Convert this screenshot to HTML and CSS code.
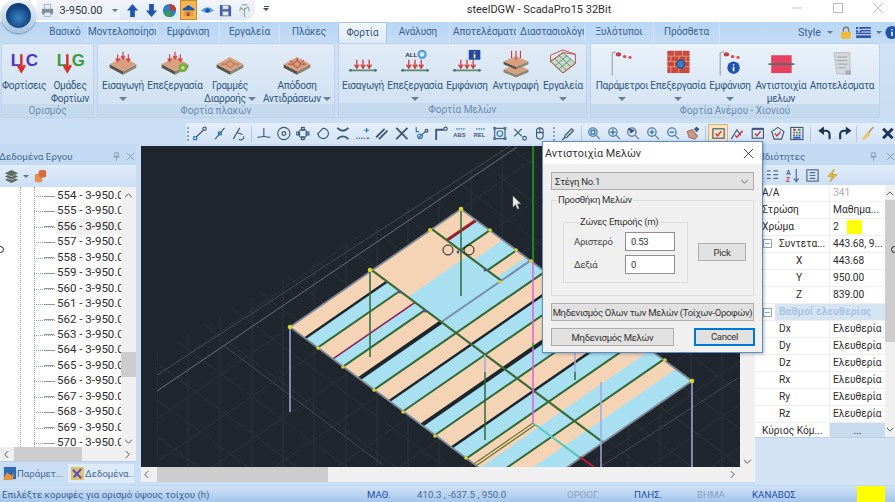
FILE: index.html
```html
<!DOCTYPE html>
<html lang="el">
<head>
<meta charset="utf-8">
<title>steelDGW - ScadaPro15 32Bit</title>
<link rel="stylesheet" href="styles.css">
</head>
<body>
<svg class="defs" width="0" height="0">
  <defs>
    <symbol id="arrows3" viewBox="0 0 36 32"><path class="red" d="M12 6v7M9.800 10.500 12 14l2.200-3.500M18 3v7M15.800 7.500 18 11l2.200-3.500M24 6v7M21.800 10.500 24 14l2.200-3.500"/></symbol>
    <symbol id="slab" viewBox="0 0 36 32">
      <polygon class="s-side" points="3,17 18,25 18,29 3,21"/><polygon class="s-side2" points="18,25 33,17 33,21 18,29"/>
      <polygon class="s-top" points="18,9 33,17 18,25 3,17"/>
    </symbol>
    <symbol id="mload" viewBox="0 0 36 32">
      <path class="mline" d="M4 24H32"/><circle class="mdot" cx="4" cy="24" r="1.600"/><circle class="mdot" cx="32" cy="24" r="1.600"/>
      <path class="red2" d="M11 12v9M8.500 17.500 11 21.500l2.500-4M18 12v9M15.500 17.500 18 21.500l2.500-4M25 12v9M22.500 17.500 25 21.500l2.500-4"/>
    </symbol>
    <symbol id="flag" viewBox="0 0 36 32">
      <path class="pole" d="M7 30V4.500L11 3"/>
      <ellipse class="fl" cx="14" cy="6" rx="3" ry="2.500"/><ellipse class="fl2" cx="21" cy="8.500" rx="2" ry="1.800"/><ellipse class="fl2" cx="27" cy="9.500" rx="1.800" ry="1.600"/>
    </symbol>
    <symbol id="mag" viewBox="0 0 16 16"><circle cx="7" cy="6.500" r="4.500"/><path class="thick" d="M10.500 10 14.500 14"/></symbol>
  </defs>
</svg>

<div class="app">
  <div class="orb"><div class="orb-in"></div></div>

  <header class="titlebar">
    <div class="qat">
      <svg class="qi" viewBox="0 0 16 16"><rect class="print" x="2" y="6" width="12" height="6" rx="1"/><rect class="paper" x="4.500" y="1.500" width="7" height="5"/><rect class="paper" x="4.500" y="10" width="7" height="4.500"/></svg>
      <div class="qcombo"><span>3-950.00</span><i class="caret"></i></div>
      <svg class="qi" viewBox="0 0 16 16"><path class="fblue" d="M8 1 14 8H10.500V15H5.500V8H2z"/></svg>
      <svg class="qi" viewBox="0 0 16 16"><path class="fblue" d="M8 15 14 8H10.500V1H5.500V8H2z"/></svg>
      <svg class="qi" viewBox="0 0 16 16"><circle class="fglobe" cx="8" cy="8" r="7"/><path class="fred" d="M8 1a7 7 0 0 1 7 7H9z"/><path class="fgreen" d="M2 10 8 8l3 7H6z"/></svg>
      <div class="qhi"><svg class="qi" viewBox="0 0 16 16"><path class="fblue" d="M1 7 8 2l7 5-2 1H3z"/><rect class="fhouse" x="3" y="8" width="10" height="6"/><rect class="fred" x="6" y="10" width="3" height="4"/></svg></div>
      <svg class="qi" viewBox="0 0 16 16"><path class="feye" d="M1 8q7-7 14 0-7 5-14 0z"/><circle class="fblue" cx="8" cy="8" r="2.500"/></svg>
      <svg class="qi" viewBox="0 0 16 16"><path class="fsave" d="M2 2H12L14 4V14H2z"/><rect class="paper" x="5" y="2.500" width="6" height="4"/><rect class="paper" x="5" y="9" width="6" height="4.500"/></svg>
      <svg class="qi" viewBox="0 0 16 16"><path class="tree" d="M8 15V5M8 8 4 5M8 7l4-3M3 9l1-5M13 9l-1-5M5 2h6"/></svg>
    </div>
    <span class="qcust"><i class="dash"></i><i class="caret dark"></i></span>
    <div class="wintitle">steelDGW - ScadaPro15 32Bit</div>
    <div class="winbtns">
      <svg viewBox="0 0 12 12"><path d="M1 6H11"/></svg>
      <svg viewBox="0 0 12 12"><rect x="1.500" y="1.500" width="9" height="9"/></svg>
      <svg viewBox="0 0 12 12"><path d="M1 1 11 11M11 1 1 11"/></svg>
    </div>
  </header>

  <nav class="tabs">
    <span class="tab t1">Βασικό</span>
    <span class="tab t2">Μοντελοποίηση</span>
    <span class="tab t3">Εμφάνιση</span>
    <span class="tab t4">Εργαλεία</span>
    <span class="tab t5">Πλάκες</span>
    <span class="tab t6 active">Φορτία</span>
    <span class="tab t7">Ανάλυση</span>
    <span class="tab t8">Αποτελέσματα</span>
    <span class="tab t9">Διαστασιολόγηση</span>
    <span class="tab t10">Ξυλότυποι</span>
    <span class="tab t11">Πρόσθετα</span>
    <div class="tabs-right">
      <span class="style-l">Style</span><i class="caret"></i>
      <svg class="ri" viewBox="0 0 16 16"><path class="lock-s" d="M5 8V5a3 3 0 0 1 6 0v3"/><rect class="lock" x="2.500" y="7" width="11" height="8" rx="1"/></svg>
      <svg class="ri flagi" viewBox="0 0 16 12"><rect class="gr" width="16" height="12"/><path class="gr-w" d="M0 2.500H16M0 5.500H16M0 8.500H16"/><rect class="gr" width="6" height="6"/><path class="gr-w" d="M3 0V6M0 3H6"/></svg>
      <i class="caret"></i>
      <svg class="ri info" viewBox="0 0 16 16"><circle class="fblue" cx="8" cy="8" r="7.500"/><path class="white" d="M8 4v1.500M8 7v5"/></svg>
    </div>
  </nav>

  <section class="ribbon">
    <div class="group g1">
      <div class="btns">
        <div class="rb w46">
          <svg class="ric" viewBox="0 0 36 32"><text class="logo" x="3" y="19"><tspan class="lb">L</tspan><tspan class="ld"> </tspan><tspan class="lb">C</tspan></text><path class="red3" d="M15 6V22M11 18 15 25l4-7"/></svg>
          <span>Φορτίσεις</span>
        </div>
        <div class="rb w46">
          <svg class="ric" viewBox="0 0 36 32"><text class="logo" x="3" y="19"><tspan class="lg">L</tspan><tspan class="ld"> </tspan><tspan class="lg">G</tspan></text><path class="red3" d="M15 6V22M11 18 15 25l4-7"/></svg>
          <span>Ομάδες<br>Φορτίων</span>
        </div>
      </div>
      <div class="glabel">Ορισμός</div>
    </div>
    <div class="group g2">
      <div class="btns">
        <div class="rb w52">
          <svg class="ric" viewBox="0 0 36 32"><use href="#slab"/><use href="#arrows3"/></svg>
          <span>Εισαγωγή</span><i class="drop"></i>
        </div>
        <div class="rb w52">
          <svg class="ric" viewBox="0 0 36 32"><use href="#slab"/><use href="#arrows3"/><circle class="gear" cx="27" cy="21" r="5"/><circle class="gear-in" cx="27" cy="21" r="2"/></svg>
          <span>Επεξεργασία</span>
        </div>
        <div class="rb w58">
          <svg class="ric" viewBox="0 0 36 32"><use href="#slab"/><path class="yl" d="M8 17 13 17 18 13 23 17H28M13 17 18 21 23 17"/></svg>
          <span>Γραμμές<br>Διαρροής <i class="inl"></i></span>
        </div>
        <div class="rb w76">
          <svg class="ric" viewBox="0 0 36 32"><use href="#slab"/><path class="yl2" d="M8 17 13 17 18 13 23 17H28M13 17 18 21 23 17M18 13V10M13 15 10 13M23 15l3-2"/></svg>
          <span>Απόδοση<br>Αντιδράσεων <i class="inl"></i></span>
        </div>
      </div>
      <div class="glabel">Φορτία πλακών</div>
    </div>
    <div class="group g3">
      <div class="btns">
        <div class="rb w50">
          <svg class="ric" viewBox="0 0 36 32"><use href="#mload"/></svg>
          <span>Εισαγωγή</span>
        </div>
        <div class="rb w54">
          <svg class="ric" viewBox="0 0 36 32"><use href="#mload"/><text class="all" x="7" y="9">ALL</text><circle class="ring" cx="26" cy="6" r="4"/></svg>
          <span>Επεξεργασία</span><i class="drop"></i>
        </div>
        <div class="rb w50">
          <svg class="ric" viewBox="0 0 36 32"><use href="#mload"/><rect class="navy" x="20" y="1" width="13" height="11"/><path class="white" d="M26.500 3v1M26.500 5.500v5"/></svg>
          <span>Εμφάνιση</span>
        </div>
        <div class="rb w47">
          <svg class="ric" viewBox="0 0 36 32"><polygon class="s-top" points="18,17 32,23 18,29 4,23"/><polygon class="s-side2" points="4,23 18,29 32,23 32,26 18,32 4,26"/><polygon class="s-side" points="4,14 18,20 18,23 4,17"/><polygon class="s-side2" points="18,20 32,14 32,17 18,23"/><polygon class="s-top" points="18,8 32,14 18,20 4,14"/><path class="red" d="M13 2v8M18 2v10M23 2v8"/></svg>
          <span>Αντιγραφή</span>
        </div>
        <div class="rb w48">
          <svg class="ric" viewBox="0 0 36 32"><path class="netb" d="M4 14 18 27 32 16 18 4zM9 19 23 7M13 23 27 11M8 10 22 24M13 7 27 20"/><path class="netr" d="M4 14 18 4 32 6V16L18 27zM4 14 4 7 18 1 32 6"/></svg>
          <span>Εργαλεία</span><i class="drop"></i>
        </div>
      </div>
      <div class="glabel">Φορτία Μελών</div>
    </div>
    <div class="group g4">
      <div class="btns">
        <div class="rb w64">
          <svg class="ric" viewBox="0 0 36 32"><use href="#flag"/></svg>
          <span>Παράμετροι</span><i class="drop"></i>
        </div>
        <div class="rb w48">
          <svg class="ric" viewBox="0 0 36 32"><rect class="brick" x="6" y="2" width="25" height="25"/><path class="brick-l" d="M6 8H31M6 14H31M6 20H31M14 2v6M23 2v6M10 8v6M19 8v6M27 8v6M14 14v6M23 14v6M10 20v7M19 20v7"/><circle class="gearb" cx="21" cy="17" r="4.500"/></svg>
          <span>Επεξεργασία</span><i class="drop"></i>
        </div>
        <div class="rb w56">
          <svg class="ric" viewBox="0 0 36 32"><use href="#flag"/><circle class="fblue" cx="22" cy="21" r="7"/><path class="white" d="M22 17v1.500M22 20v5"/></svg>
          <span>Εμφάνιση</span><i class="drop"></i>
        </div>
        <div class="rb w46">
          <svg class="ric" viewBox="0 0 36 32"><rect class="pink" x="7" y="7" width="23" height="20"/><path class="tealb" d="M4 17H33"/></svg>
          <span>Αντιστοιχία<br>μελων</span>
        </div>
        <div class="rb w76">
          <svg class="ric" viewBox="0 0 36 32"><path class="doc" d="M9 4H27V28H12z"/><path class="docl" d="M12 9H24M12 13H24M13 17H24M14 21H22"/><rect class="doc2" x="22" y="24" width="6" height="5"/></svg>
          <span>Αποτελέσματα</span>
        </div>
      </div>
      <div class="glabel">Φορτία Ανέμου - Χιονιού</div>
    </div>
  </section>

  <div class="tbrow">
    <div class="toolbar">
      <i class="grip"></i>
      <svg class="ti" viewBox="0 0 16 16"><path d="M4 12 12 4"/><circle cx="13" cy="3" r="1.800"/><rect class="bl" x="1.500" y="11.500" width="3" height="3"/></svg>
      <svg class="ti" viewBox="0 0 16 16"><path d="M3 14 13 2"/><rect class="bl" x="6.500" y="6.500" width="3" height="3"/></svg>
      <svg class="ti" viewBox="0 0 16 16"><path d="M2 14 9 2M6 7l6 2M8 14a3 3 0 0 0 5-3"/></svg>
      <i class="sep s5"></i>
      <svg class="ti" viewBox="0 0 16 16"><path d="M8 2V11M1 12q4 0 7-1 3 1 7 1"/></svg>
      <svg class="ti" viewBox="0 0 16 16"><circle cx="8" cy="8" r="6.500"/><circle cx="8" cy="8" r="2"/></svg>
      <svg class="ti" viewBox="0 0 16 16"><circle cx="8" cy="8" r="4.500"/><rect x="6.500" y="1.500" width="3" height="3"/><rect x="6.500" y="11.500" width="3" height="3"/><rect x="1.500" y="6.500" width="3" height="3"/><rect x="11.500" y="6.500" width="3" height="3"/></svg>
      <svg class="ti" viewBox="0 0 16 16"><path d="M3 8a5.500 5.500 0 1 0 5-5.500M8 2.500 2 9"/></svg>
      <svg class="ti heavy" viewBox="0 0 16 16"><path d="M2 2Q8 8 14 2M2 14Q8 8 14 14"/></svg>
      <svg class="ti" viewBox="0 0 16 16"><path class="dots" d="M1 13H10"/><path class="bl" d="M12 2V7M9.500 4.500H14.500"/><path d="M12 13h3"/></svg>
      <svg class="ti heavy" viewBox="0 0 16 16"><path d="M2 12 11 3M5 14 14 5"/></svg>
      <svg class="ti heavy" viewBox="0 0 16 16"><path d="M2 2 14 14M14 2 2 14"/></svg>
      <svg class="ti" viewBox="0 0 16 16"><path class="bl" d="M2 1V6H5"/><path d="M4 13 13 5"/><circle class="bl" cx="6" cy="11" r="2.500"/><circle cx="13" cy="5" r="1.500"/></svg>
      <svg class="ti heavy" viewBox="0 0 16 16"><path d="M3 15V4H11"/><circle class="thin" cx="13" cy="3" r="1.800"/></svg>
      <svg class="ti" viewBox="0 0 16 16"><path class="bl dots" d="M3 3H13"/><text class="tt" x="0" y="12">ABS</text></svg>
      <svg class="ti" viewBox="0 0 16 16"><path class="bl dots" d="M3 3H13"/><text class="tt" x="0.500" y="12">REL</text></svg>
      <svg class="ti" viewBox="0 0 16 16"><rect x="2.500" y="2.500" width="11" height="11"/><circle class="bl" cx="8" cy="8" r="3"/><rect class="fillb" x="1" y="1" width="3" height="3"/><rect class="fillb" x="12" y="1" width="3" height="3"/><rect class="fillb" x="1" y="12" width="3" height="3"/><rect class="fillb" x="12" y="12" width="3" height="3"/></svg>
      <svg class="ti" viewBox="0 0 16 16"><path d="M2 3 10 11M10 3 2 11"/><circle cx="13" cy="13" r="2"/></svg>
      <svg class="ti" viewBox="0 0 16 16"><rect x="4.500" y="2" width="7" height="12" rx="3.500"/><path d="M8 2V7M4.500 7H11.500"/></svg>
      <i class="grip g2s"></i>
      <svg class="ti" viewBox="0 0 16 16"><path class="pen" d="M3 13 4 10 11 3 13 5 6 12z"/><path d="M1 15 3 13"/></svg>
      <i class="sep s5"></i>
      <svg class="ti mg" viewBox="0 0 16 16"><use href="#mag"/><rect class="bl" x="5" y="4.500" width="4" height="4"/></svg>
      <svg class="ti mg" viewBox="0 0 16 16"><use href="#mag"/><path class="bl" d="M7 3.500v6M4 6.500h6"/></svg>
      <svg class="ti mg" viewBox="0 0 16 16"><use href="#mag"/><path class="thick" d="M3 3 8 5 5 7"/></svg>
      <svg class="ti mg" viewBox="0 0 16 16"><use href="#mag"/><path class="bl" d="M7 4v5M4.500 6.500h5"/></svg>
      <svg class="ti mg" viewBox="0 0 16 16"><use href="#mag"/><path class="bl" d="M4.500 6.500h5"/></svg>
      <svg class="ti" viewBox="0 0 16 16"><path class="hand" d="M2 6 7 4l6 7-3 3-6-2z"/><path class="thick" d="M12 1v5M9.500 3.500h5"/></svg>
      <i class="sep s6"></i>
      <span class="tb-hi"><svg class="ti" viewBox="0 0 16 16"><rect x="2" y="3" width="12" height="10"/><path class="chk" d="M5 8 7 10.500 11 5.500"/></svg></span>
      <svg class="ti" viewBox="0 0 16 16"><path d="M1 14 7 4l4 6"/><path class="chk" d="M5 10 7 12l6-7"/></svg>
      <svg class="ti" viewBox="0 0 16 16"><path class="thick" d="M2 3H14"/><rect x="2" y="3" width="12" height="10"/><path class="chk" d="M5 8 7 10.500 11 5.500"/></svg>
      <svg class="ti" viewBox="0 0 16 16"><path d="M8 1.500 14.500 6 12 14H4L1.500 6z"/><path class="chk" d="M5 8 7 10.500 11 6"/></svg>
      <svg class="ti" viewBox="0 0 16 16"><rect x="1.500" y="1.500" width="13" height="13"/><path class="mr" d="M4 4H7M10 7h2M4 10H6"/><path class="mg2" d="M7 7H9M9 4h3M4 7H6M7 10h2"/><path class="mb" d="M10 10h2M4 12.500H12"/></svg>
      <i class="sep s8"></i>
      <svg class="ti hv" viewBox="0 0 16 16"><path d="M13 14V9a4 4 0 0 0-4-4H3"/><path class="fhv" d="M7 0.500 1 5l6 4.500z"/></svg>
      <svg class="ti hv" viewBox="0 0 16 16"><path d="M3 14V9a4 4 0 0 1 4-4H13"/><path class="fhv" d="M9 0.500 15 5l-6 4.500z"/></svg>
      <i class="sep s4"></i>
      <svg class="ti" viewBox="0 0 16 16"><path class="broom" d="M14 1 8 8"/><path class="brush" d="M8 6 11 9 4 15 1 14z"/></svg>
      <svg class="ti hv" viewBox="0 0 16 16"><path class="xx" d="M3 3 13 13M13 3 3 13"/></svg>
    </div>
  </div>

  <main class="main">
    <aside class="left">
      <div class="phead"><span class="ptitle shift">Δεδομένα Εργου</span>
        <svg class="pin" viewBox="0 0 10 10"><path d="M3 1H7V5H3zM1.500 5.500H8.500M5 5.500V9.500"/></svg>
        <svg class="pin" viewBox="0 0 10 10"><path d="M1 1 9 9M9 1 1 9"/></svg>
      </div>
      <div class="ptools">
        <svg class="pti" viewBox="0 0 16 16"><path class="layer" d="M8 1 15 4.500 8 8 1 4.500z"/><path class="layer" d="M1 8 8 11.500 15 8 12 6.500 8 8.500 4 6.500z"/><path class="layer" d="M1 11.500 8 15 15 11.500 12 10 8 12 4 10z"/></svg>
        <i class="caret"></i>
        <svg class="pti" viewBox="0 0 16 16"><rect class="or" x="2" y="5" width="8" height="9" rx="2"/><rect class="or2" x="6" y="1" width="8" height="8" rx="2"/></svg>
      </div>
      <div class="treewrap">
        <div class="tree-body">
          <i class="blip"></i>
          <i class="vdot v1"></i><i class="vdot v2"></i>
          <ul class="rows">
            <li>554 - 3-950.00</li><li>555 - 3-950.00</li><li class="sel">556 - 3-950.00</li><li>557 - 3-950.00</li>
            <li>558 - 3-950.00</li><li>559 - 3-950.00</li><li>560 - 3-950.00</li><li>561 - 3-950.00</li>
            <li>562 - 3-950.00</li><li>563 - 3-950.00</li><li>564 - 3-950.00</li><li>565 - 3-950.00</li>
            <li>566 - 3-950.00</li><li>567 - 3-950.00</li><li>568 - 3-950.00</li><li>569 - 3-950.00</li><li>570 - 3-950.00</li>
          </ul>
        </div>
        <div class="vbar tv">
          <svg class="chev" viewBox="0 0 10 6"><path d="M1 5 5 1 9 5"/></svg>
          <div class="vthumb"></div>
          <svg class="chev" viewBox="0 0 10 6"><path d="M1 1 5 5 9 1"/></svg>
        </div>
      </div>
      <div class="hbar th">
        <svg class="chevh" viewBox="0 0 6 10"><path d="M5 1 1 5 5 9"/></svg>
        <div class="hthumb short"></div>
        <svg class="chevh" viewBox="0 0 6 10"><path d="M1 1 5 5 1 9"/></svg>
      </div>
      <div class="ltabs">
        <div class="ltab"><svg class="lti" viewBox="0 0 16 16"><rect class="navyf" x="2" y="1" width="13" height="13"/><path class="orf" d="M1 15 5 7l5 3 3-2-2 7z"/></svg><span>Παράμετ...</span></div>
        <div class="ltab on"><svg class="lti" viewBox="0 0 16 16"><rect class="yelf" x="1" y="1" width="14" height="14"/><path class="xmark" d="M3 4 12 13M12 3 4 12"/></svg><span>Δεδομένα...</span></div>
      </div>
    </aside>

    <div class="view">
      <svg class="canvas" viewBox="141 146 599 321" preserveAspectRatio="none">
        <defs>
          <clipPath id="gridclip"><polygon points="157,352 515,146 740,146 740,467 157,467"/></clipPath>
        </defs>
        <g clip-path="url(#gridclip)">
          <path class="gv" d="M157 146V467M188 146V467M220 146V467M252 146V467M283 146V467M314 146V467M346 146V467M377 146V467M408 146V467M439 146V467M471 146V467M502 146V467M534 146V467M565 146V467M597 146V467M628 146V467M660 146V467M691 146V467M722 146V467"/>
          <g transform="matrix(2.31 1.72 1.71 -1.18 290 327)">
            <path class="gd" d="M-130 -300V300M-117 -300V300M-104 -300V300M-91 -300V300M-78 -300V300M-65 -300V300M-52 -300V300M-39 -300V300M-26 -300V300M-13 -300V300M0 -300V300M13 -300V300M26 -300V300M39 -300V300M52 -300V300M65 -300V300M78 -300V300M91 -300V300M104 -300V300M117 -300V300M130 -300V300M143 -300V300M156 -300V300M169 -300V300M182 -300V300"/>
            <path class="gd" d="M-300 -130H300M-300 -115H300M-300 -100H300M-300 -85H300M-300 -70H300M-300 -55H300M-300 -40H300M-300 -25H300M-300 -10H300M-300 5H300M-300 20H300M-300 35H300M-300 50H300M-300 65H300M-300 80H300M-300 95H300M-300 110H300M-300 125H300M-300 140H300"/>
          </g>
        </g>
        <path class="gb" d="M157 391 517 147"/>
        <path class="gb3" d="M157 375 510 146"/>
        <path class="gb2" d="M223 345 383 465M600 467 738 378"/>

        <g transform="matrix(2.31 1.72 1.71 -1.18 290 327)">
          <rect class="blue" x="0" y="0" width="100" height="100"/>
          <rect class="peach" x="0" y="0" width="6.500" height="48"/>
          <rect class="peach" x="12" y="0" width="6.600" height="48"/>
          <rect class="peach" x="23" y="0" width="7" height="48"/>
          <rect class="peach" x="36.400" y="0" width="6.600" height="100"/>
          <rect class="peach" x="49" y="0" width="8" height="100"/>
          <rect class="peach" x="62.800" y="0" width="7.200" height="100"/>
          <rect class="peach" x="76.400" y="0" width="5.600" height="100"/>
          <rect class="peach" x="87.600" y="0" width="5.400" height="100"/>
          <rect class="peach" x="0" y="48" width="15.500" height="35"/>
          <rect class="peach" x="0" y="83" width="6.500" height="17"/>
          <rect class="peach" x="12.400" y="83" width="5.600" height="17"/>
          <rect class="peach" x="24" y="83" width="4" height="17"/>
          <path class="l-blk" d="M6.500 0V48M43 0V100M70 0V100"/>
          <path class="l-blk2" d="M30 0V48M57 0V100"/>
          <path class="l-grn" d="M12 0V48M23 0V48M36.400 0V100M49 0V100M62.800 0V100M76.400 0V100M87.600 0V100M12.400 83V100M24 83V100"/>
          <path class="l-red" d="M18.600 0V48"/>
          <path class="l-red2" d="M6.500 83V100"/>
          <path class="l-olv" d="M79.600 0V34.600M80.600 0V34.600"/>
          <path class="l-tea" d="M79.600 34.600H100"/>
          <path class="l-gry" d="M30 48V100"/>
          <path class="l-rdg" d="M0 48H100M0 83H30"/>
          <path class="l-edge" d="M0 0H100V100H0z"/>
        </g>

        <path class="c-lav" d="M290 327V412M601 382V467M692 381V467"/>
        <path class="c-lav" d="M485 355V372M575 340V372"/>
        <path class="c-grn" d="M370 272V357M461 209V296M485 372V440M575 372V380"/>
        <path class="c-bright" d="M533 146V261M533 343V348"/>
        <path class="c-mag" d="M533 261V343M533 348V423"/>
        <path class="c-teal" d="M533 423 580 457"/>
        <path class="c-red" d="M580 457 594 467"/>
        <g class="nodes">
          <circle cx="290" cy="327" r="2.300"/><circle cx="370" cy="270" r="2.300"/><circle cx="461" cy="209" r="2.300"/><circle cx="430" cy="230" r="2"/><circle cx="490" cy="230" r="1.800"/><circle cx="516" cy="250" r="1.800"/><circle cx="531" cy="261" r="1.800"/><circle cx="500" cy="282" r="1.800"/><circle cx="318" cy="348" r="1.800"/><circle cx="343" cy="367" r="1.800"/><circle cx="374" cy="390" r="1.800"/><circle cx="403" cy="412" r="1.800"/><circle cx="435" cy="436" r="1.800"/><circle cx="466" cy="458" r="1.800"/><circle cx="665" cy="360" r="1.800"/><circle cx="692" cy="381" r="2.300"/>
        </g>
        <g class="mids"><circle cx="400" cy="292" r="1.500"/><circle cx="425" cy="311" r="1.500"/><circle cx="458" cy="252" r="1.500"/><circle cx="485" cy="270" r="1.500"/></g>
        <circle class="pick" cx="448" cy="250" r="5"/><circle class="pick" cx="469" cy="250" r="5"/>
        <path class="cursor" d="M513 196V207L515.500 204.500 517.500 209 519 208.300 517 203.800H520.500z"/>
      </svg>
      <div class="vbar cv">
        <div class="vthumb long"></div>
        <svg class="chev" viewBox="0 0 10 6"><path d="M1 1 5 5 9 1"/></svg>
      </div>
      <div class="hbar ch">
        <svg class="chevh" viewBox="0 0 6 10"><path d="M5 1 1 5 5 9"/></svg>
        <div class="hthumb wide"></div>
        <svg class="chevh" viewBox="0 0 6 10"><path d="M1 1 5 5 1 9"/></svg>
      </div>
      <div class="corner"></div>
    </div>

    <aside class="right">
      <div class="phead"><span class="ptitle pad">Ιδιότητες</span>
        <svg class="pin" viewBox="0 0 10 10"><path d="M3 1H7V5H3zM1.500 5.500H8.500M5 5.500V9.500"/></svg>
        <svg class="pin" viewBox="0 0 10 10"><path d="M1 1 9 9M9 1 1 9"/></svg>
      </div>
      <div class="rtools">
        <svg class="pti" viewBox="0 0 16 16"><path class="cat" d="M2 3H6M2 7H6M2 11H6M9 3H14M9 7H14M9 11H14"/></svg>
        <svg class="pti az" viewBox="0 0 16 16"><text class="azt" x="1" y="7">A</text><text class="azr" x="1" y="15">Z</text><path class="cat" d="M12 1V14M9.500 11 12 14.500 14.500 11"/></svg>
        <svg class="pti" viewBox="0 0 16 16"><rect class="cat" x="2" y="2" width="12" height="12"/><path class="cat" d="M5 5H11M5 8H11M5 11H11"/></svg>
        <svg class="pti" viewBox="0 0 16 16"><path class="bolt" d="M10 1 3 9H8L5 15l8-8H8z"/></svg>
      </div>
      <div class="pgwrap">
        <div class="pg">
          <div class="pr"><span class="pk">Α/Α</span><span class="pv dim">341</span></div>
          <div class="pr"><span class="pk">Στρώση</span><span class="pv">Μαθημα...</span></div>
          <div class="pr"><span class="pk">Χρώμα</span><span class="pv">2<i class="swatch"></i></span></div>
          <div class="pr"><span class="pk tog"><i class="minus"></i>Συντετα...</span><span class="pv">443.68, 9...</span></div>
          <div class="pr"><span class="pk sub">X</span><span class="pv">443.68</span></div>
          <div class="pr"><span class="pk sub">Y</span><span class="pv">950.00</span></div>
          <div class="pr"><span class="pk sub">Z</span><span class="pv">839.00</span></div>
          <div class="pr head"><i class="minus"></i><span class="hd">Βαθμοί ελευθερίας</span></div>
          <div class="pr"><span class="pk ind">Dx</span><span class="pv">Ελευθερία</span></div>
          <div class="pr"><span class="pk ind">Dy</span><span class="pv">Ελευθερία</span></div>
          <div class="pr"><span class="pk ind">Dz</span><span class="pv">Ελευθερία</span></div>
          <div class="pr"><span class="pk ind">Rx</span><span class="pv">Ελευθερία</span></div>
          <div class="pr"><span class="pk ind">Ry</span><span class="pv">Ελευθερία</span></div>
          <div class="pr"><span class="pk ind">Rz</span><span class="pv">Ελευθερία</span></div>
          <div class="pr"><span class="pk">Κύριος Κόμ...</span><span class="pv dots3">...</span></div>
        </div>
        <div class="vbar rv">
          <svg class="chev" viewBox="0 0 10 6"><path d="M1 5 5 1 9 5"/></svg>
          <div class="vthumb rth"></div>
          <svg class="chev" viewBox="0 0 10 6"><path d="M1 1 5 5 9 1"/></svg>
        </div>
      </div>
      <div class="pdesc"></div>
      <i class="blip rb2"></i>
    </aside>
  </main>

  <footer class="status">
    <span class="st s-msg">Επιλέξτε κορυφές για ορισμό ύψους τοίχου (h)</span>
    <span class="st s-ma on">ΜΑΘ.</span>
    <span class="st s-co">410.3 , -637.5 , 950.0</span>
    <span class="st s-or off">ΟΡΘΟΓ.</span>
    <span class="st s-pl on">ΠΛΗΣ.</span>
    <span class="st s-bh off">ΒΗΜΑ</span>
    <span class="st s-ka on">ΚΑΝΑΒΟΣ</span>
    <i class="st-yellow"></i>
  </footer>

  <div class="dialog">
    <div class="dtitle"><span>Αντιστοιχία Μελών</span>
      <svg class="dx" viewBox="0 0 12 12"><path d="M1 1 11 11M11 1 1 11"/></svg>
    </div>
    <div class="dbody">
      <div class="combo"><span>Στέγη Νο.1</span><svg class="cchev" viewBox="0 0 10 6"><path d="M1 1 5 5 9 1"/></svg></div>
      <fieldset class="fs outer">
        <legend>Προσθήκη Μελών</legend>
        <div class="fsrow">
          <fieldset class="fs inner">
            <legend>Ζώνες Επιροής (m)</legend>
            <div class="inrow"><label>Αριστερό</label><span class="inp">0.53</span></div>
            <div class="inrow"><label>Δεξιά</label><span class="inp">0</span></div>
          </fieldset>
          <button class="btn pickb" type="button">Pick</button>
        </div>
      </fieldset>
      <button class="btn wide-b" type="button">Μηδενισμός Ολων των Μελών (Τοίχων-Οροφών)</button>
      <div class="drow">
        <button class="btn zero" type="button">Μηδενισμός Μελών</button>
        <button class="btn cancel" type="button">Cancel</button>
      </div>
    </div>
  </div>
</div>
</body>
</html>
```

FILE: styles.css
```css
* { box-sizing: border-box; }
html, body { margin: 0; padding: 0; }
body { width: 895px; height: 502px; overflow: hidden; font-family: Roboto, "Noto Sans", sans-serif; font-size: 10px; color: #2f4f78; }
.defs { position: absolute; }
.app { position: relative; width: 895px; height: 502px; display: flex; flex-direction: column; overflow: hidden; background: #c9def5; }
i { display: block; }

/* orb */
.orb { position: absolute; left: 1px; top: -2px; width: 35px; height: 35px; border-radius: 50%; background: linear-gradient(#f2f6fb, #a9c3df); display: flex; align-items: center; justify-content: center; z-index: 3; box-shadow: 0 1px 2px #6a86a6; }
.orb-in { width: 25px; height: 25px; border-radius: 50%; background: radial-gradient(circle at 50% 60%, #3d84c6, #12447f 60%, #0b2d57); }

/* title */
.titlebar { height: 22px; background: #fff; display: flex; align-items: flex-start; position: relative; flex: none; }
.qat { margin-left: 37px; width: 218px; height: 20px; background: linear-gradient(#f2f6fb, #dfe9f4); border-radius: 0 0 10px 0; display: flex; align-items: center; padding-left: 3px; }
.qi { width: 15px; height: 15px; margin-right: 3.500px; flex: none; }
.qcombo { width: 62px; height: 17px; margin-right: 5px; display: flex; align-items: center; justify-content: space-between; padding: 0 2px 0 1px; background: #eef3f9; font-size: 11px; color: #30353c; }
.qhi { width: 17px; height: 20px; background: #f4b552; border: 1px solid #c98a2c; display: flex; align-items: center; justify-content: center; margin: 0 3px 0 -1px; }
.qhi .qi { margin: 0; }
.caret { width: 0; height: 0; border-left: 3px solid transparent; border-right: 3px solid transparent; border-top: 3px solid #5c7896; flex: none; }
.caret.dark { border-top-color: #3c5066; margin-top: 1px; }
.qcust { margin: 6px 0 0 8px; display: block; }
.dash { width: 5px; height: 1px; background: #3c5066; margin: 0 0 1px 0.500px; }
.print { fill: #7f8c99; }
.paper { fill: #e7ecf1; stroke: #8492a1; stroke-width: .6; }
.fblue { fill: #1f53ad; }
.fglobe { fill: #2a7fc0; }
.fred { fill: #c8382c; }
.fgreen { fill: #3f9a47; }
.fhouse { fill: #d4a24c; }
.feye { fill: #58a5d8; }
.fsave { fill: #4a5fb0; }
.tree { fill: none; stroke: #9aa5a0; stroke-width: 1.200; }
.wintitle { position: absolute; left: 0; right: 0; top: 2px; padding-left: 183px; text-align: center; font-size: 11px; line-height: 15px; color: #2f2f2f; }
.winbtns { margin-left: auto; display: flex; width: 107px; padding-top: 2px; justify-content: space-between; padding-right: 11px; padding-left: 3px; z-index: 1; }
.winbtns svg { width: 12px; height: 12px; fill: none; stroke: #b9b9b9; stroke-width: 1; }
.winbtns svg:first-child { stroke: #c8c8c8; }

/* tabs */
.tabs { height: 21px; flex: none; display: flex; padding-left: 43px; background: linear-gradient(#b8d6f5, #c5dcf5); position: relative; }
.tab { height: 21px; line-height: 20px; text-align: center; white-space: nowrap; overflow: hidden; font-size: 10px; letter-spacing: -.1px; color: #3a6090; border-right: 1px solid #d2e3f5; }
.t1 { width: 45px; } .t2 { width: 69px; } .t3 { width: 63px; } .t4 { width: 60px; } .t5 { width: 58px; border-right: 0; }
.t6 { width: 49px; } .t7 { width: 63px; } .t8 { width: 67px; text-align: left; padding-left: 3px; } .t9 { width: 68px; text-align: left; padding-left: 3px; } .t10 { width: 69px; } .t11 { width: 66px; }
.tab.active { background: linear-gradient(#f2f7fc, #dce9f7); border: 1px solid #a9c5e2; border-bottom: 0; border-radius: 2px 2px 0 0; color: #31517a; }
.tabs-right { position: absolute; right: 0; top: 0; height: 21px; width: 97px; display: flex; align-items: center; }
.style-l { font-size: 10.500px; color: #3a6090; margin-right: 6px; }
.ri { width: 14px; height: 15px; margin-left: 6px; flex: none; }
.flagi { width: 15px; height: 11px; margin: 0 5px 0 3px; }
.info { margin-left: 3px; }
.lock-s { fill: none; stroke: #777; stroke-width: 1.500; }
.lock { fill: #eebb34; }
.gr { fill: #2b58a8; }
.gr-w { stroke: #fff; stroke-width: 1; fill: none; }
.white { stroke: #fff; stroke-width: 1.800; fill: none; }

/* ribbon */
.ribbon { height: 77px; flex: none; display: flex; background: linear-gradient(#cfe2f6, #c9dcf2); padding-top: 0; }
.group { height: 75px; display: flex; flex-direction: column; margin-right: 3px; border: 1px solid #bdd2ea; border-radius: 2px; background: linear-gradient(#e0ebf6, #d4e3f3 70%); overflow: visible; }
.g1 { width: 93px; margin-left: 1px; }
.g2 { width: 238px; }
.g3 { width: 249px; }
.g4 { width: 290px; background: linear-gradient(#eaf2fa, #d8e6f5 70%); }
.btns { display: flex; height: 60px; margin: 0 -1px; }
.glabel { height: 14px; line-height: 13px; text-align: center; background: #c6daef; color: #6b8bb0; font-size: 10px; }
.rb { display: flex; flex-direction: column; align-items: center; flex: none; white-space: nowrap; line-height: 13px; font-size: 10px; letter-spacing: -.25px; color: #2f5580; text-align: center; }
.rb span { display: block; }
.ric { width: 32px; height: 28.500px; margin: 5px 0 1px; flex: none; }
.w46 { width: 46px; } .w47 { width: 47px; } .w48 { width: 48px; } .w50 { width: 50px; } .w52 { width: 52px; } .w54 { width: 54px; } .w56 { width: 56px; } .w58 { width: 58px; } .w64 { width: 64px; } .w76 { width: 76px; }
.drop { width: 0; height: 0; margin-top: 5px; border-left: 4px solid transparent; border-right: 4px solid transparent; border-top: 4px solid #6b7f96; }
.inl { display: inline-block; width: 0; height: 0; border-left: 4px solid transparent; border-right: 4px solid transparent; border-top: 4px solid #6b7f96; vertical-align: 1px; }
.logo { font: bold 19px "Liberation Sans", sans-serif; letter-spacing: 0; }
.lb { fill: #4b36c4; }
.lg { fill: #3a9a3a; }
.ld { fill: none; }
.red, .red2, .red3 { fill: none; stroke: #d23c3c; }
.red { stroke-width: 1.300; }
.red2 { stroke-width: 1.500; }
.red3 { stroke-width: 2.800; stroke: #d8302c; }
.s-top { fill: #d99f80; }
.s-side { fill: #55554a; }
.s-side2 { fill: #8a8470; }
.gear { fill: #6fb23a; }
.gear-in { fill: #cfe49b; }
.yl { fill: none; stroke: #a8664a; stroke-width: 1; }
.yl2 { fill: none; stroke: #b8584c; stroke-width: 1.300; }
.mline { stroke: #5e8a6e; stroke-width: 2; fill: none; }
.mdot { fill: #44746a; }
.all { font: bold 7px "Liberation Sans", sans-serif; letter-spacing: 0; fill: #1b2b4a; }
.ring { fill: none; stroke: #55a2dc; stroke-width: 2.500; }
.navy { fill: #24499d; }
.netb { fill: #c9d7c9; stroke: #4c8a6a; stroke-width: .9; }
.netr { fill: none; stroke: #c0443c; stroke-width: 1; }
.pole { fill: none; stroke: #a6adb5; stroke-width: 1.500; }
.fl { fill: #c83c46; }
.fl2 { fill: #d0504a; }
.brick { fill: #c94a3c; }
.brick-l { stroke: #e9b0a0; stroke-width: .8; fill: none; }
.gearb { fill: #3d7cc4; stroke: #1f4f8c; stroke-width: 1.500; }
.pink { fill: #ea3f5e; }
.tealb { stroke: #3b7b72; stroke-width: 2; fill: none; }
.doc { fill: #d3d8dc; stroke: #b8bec4; stroke-width: 1; }
.docl { stroke: #8f979e; fill: none; stroke-width: .9; }
.doc2 { fill: #a6adb3; }

/* toolbar */
.tbrow { height: 24px; flex: none; padding: 3px 0 0 186px; background: #c9def5; }
.toolbar { height: 21px; display: flex; align-items: center; background: linear-gradient(#e4eefa, #d3e3f5); }
.grip { width: 4px; height: 16px; flex: none; background-image: radial-gradient(#8ea3bb 1px, transparent 1.100px); background-size: 4px 4px; }
.g2s { width: 10px; background-position: 3px 0; background-repeat: repeat-y; }
.sep { height: 16px; flex: none; position: relative; }
.sep::after { content: ""; display: block; width: 1px; height: 16px; background: #b4c8de; margin: 0 auto; }
.s4 { width: 4px; } .s5 { width: 5px; } .s6 { width: 6px; } .s8 { width: 8px; }
.ti { width: 19.700px; height: 15px; flex: none; fill: none; stroke: #3f5873; stroke-width: 1.200; }
.ti .bl { stroke: #1d79b8; }
.ti .fillb { fill: #56708c; stroke: none; }
.ti.heavy { stroke-width: 2; }
.ti .thin { stroke-width: 1.200; }
.ti .dots { stroke-dasharray: 1.500 1; }
.ti .tt { font: bold 6.200px "Liberation Sans", sans-serif; fill: #3f5873; stroke: none; }
.ti .pen { fill: #c6cfd8; }
.ti.mg { stroke: #5d7c9c; stroke-width: 1.400; }
.ti .thick { stroke: #3a5573; stroke-width: 2.200; }
.ti .hand { fill: #c89a8a; stroke: #a87868; }
.tb-hi { width: 20px; height: 20px; flex: none; margin-right: 0; display: flex; align-items: center; justify-content: center; background: #f4e2c0; border: 1px solid #d9b678; }
.tb-hi .ti { width: 15px; }
.ti .chk { stroke: #d0303a; stroke-width: 1.500; }
.ti .mr { stroke: #d03c3c; stroke-width: 2; }
.ti .mg2 { stroke: #3c9a4c; stroke-width: 2; }
.ti .mb { stroke: #2f62c0; stroke-width: 2; }
.ti.hv { stroke: #1e3450; stroke-width: 2.200; }
.ti .fhv { fill: #1e3450; stroke: none; }
.ti .broom { stroke: #b89060; stroke-width: 1.500; }
.ti .brush { fill: #e8c86c; stroke: none; }
.ti .xx { stroke: #1c3560; stroke-width: 3.200; }

/* main */
.main { height: 341px; flex: none; display: flex; padding-top: 0; background: #c9def5; }
.left { width: 141px; flex: none; display: flex; flex-direction: column; padding-right: 5px; position: relative; }
.phead { height: 21px; flex: none; padding-top: 4px; display: flex; align-items: center; background: #c3daf3; gap: 5px; }
.ptitle { flex: 1; font-size: 9.800px; color: #46698f; white-space: nowrap; overflow: hidden; }
.ptitle.shift { margin-left: -1px; }
.ptitle.pad { padding-left: 7px; }
.pin { width: 9px; height: 9px; fill: none; stroke: #7e97b2; stroke-width: 1; flex: none; }
.left .phead { padding-right: 1px; }
.ptools { height: 22px; flex: none; display: flex; align-items: center; padding-left: 4px; gap: 4px; background: linear-gradient(#e0ecf9, #cddff4); }
.pti { width: 15px; height: 15px; flex: none; }
.layer { fill: #5d6a62; }
.or { fill: #e58f55; }
.or2 { fill: #d96a42; }
.treewrap { height: 260px; flex: none; display: flex; background: #fff; }
.tree-body { flex: 1; position: relative; overflow: hidden; }
.blip { position: absolute; left: -3px; top: 59px; width: 7px; height: 7px; border: 1px solid #222; border-radius: 50%; }
.vdot { position: absolute; top: 0; bottom: 0; border-left: 1px dotted #9aa0a6; }
.v1 { left: 20px; } .v2 { left: 34px; }
.rows { list-style: none; margin: 0; padding: 1px 0 0 56px; font-size: 11.500px; line-height: 15.440px; color: #2c2c2c; white-space: nowrap; }
.rows li { position: relative; width: 64px; padding-left: 1px; overflow: visible; }
.rows li::before { content: ""; position: absolute; left: -22px; top: 8px; width: 21px; height: 1px; background: repeating-linear-gradient(90deg, #9aa0a6 0 1px, transparent 1px 2px); }
.rows li::after { content: ""; position: absolute; left: -12px; top: 7.500px; width: 10px; height: 1px; background: #8a9aa8; }
.rows li.sel { background: #f0f0f0; }
.vbar { display: flex; flex-direction: column; align-items: center; justify-content: space-between; background: #f0f0f0; flex: none; }
.tv { width: 15px; padding: 6px 0 3px; position: relative; }
.chev { width: 9px; height: 5px; fill: none; stroke: #555; stroke-width: 1.200; flex: none; }
.vthumb { width: 100%; background: #cdcdcd; }
.tv .vthumb { position: absolute; top: 165px; left: 0; height: 25px; }
.hbar { height: 14px; flex: none; display: flex; align-items: center; background: #f0f0f0; position: relative; justify-content: space-between; padding: 0 6px 0 4px; }
.chevh { width: 5px; height: 9px; fill: none; stroke: #555; stroke-width: 1.200; flex: none; }
.hthumb { position: absolute; top: 0; bottom: 0; background: #cdcdcd; }
.hthumb.short { left: 14px; width: 68px; }
.ltabs { height: 24px; flex: none; display: flex; padding: 2px 0 2px 0; font-size: 9.600px; color: #46698f; background: #c9def5; border-top: 1px solid #b6cde6; }
.ltab { width: 68px; display: flex; align-items: center; padding-left: 2px; gap: 0; white-space: nowrap; overflow: hidden; }
.ltab.on { width: 66px; background: #dceafa; }
.lti { width: 15px; height: 15px; flex: none; }
.navyf { fill: #2f6bb4; }
.orf { fill: #e6933a; }
.yelf { fill: #dcc46a; }
.xmark { fill: none; stroke: #5b4fc0; stroke-width: 2.200; }

/* canvas */
.view { width: 614px; flex: none; margin-top: 2px; height: 336px; display: grid; grid-template-columns: 599px 15px; grid-template-rows: 321px 15px; }
.canvas { width: 599px; height: 321px; display: block; background: #1f262e; }
.gv { stroke: #2b323a; stroke-width: 1; fill: none; }
.gd { stroke: #2c333b; stroke-width: 1; fill: none; vector-effect: non-scaling-stroke; }
.gb { stroke: #6a7076; stroke-width: 1; fill: none; }
.gb3 { stroke: #444a50; stroke-width: 1; fill: none; }
.gb2 { stroke: #434950; stroke-width: 1; fill: none; }
.blue { fill: #a8e0f2; }
.peach { fill: #f5d4b6; }
.l-blk, .l-blk2, .l-grn, .l-red, .l-red2, .l-olv, .l-tea, .l-gry, .l-rdg, .l-edge { fill: none; vector-effect: non-scaling-stroke; }
.l-blk { stroke: #1d262c; stroke-width: 2.500; }
.l-blk2 { stroke: #1d262c; stroke-width: 4; }
.l-grn { stroke: #2f6a35; stroke-width: 2; }
.l-red { stroke: #8a1c5a; stroke-width: 1.500; }
.l-red2 { stroke: #9a1c2c; stroke-width: 3; }
.l-olv { stroke: #6a7030; stroke-width: 1.200; }
.l-tea { stroke: #4cc0b0; stroke-width: 1.500; }
.l-gry { stroke: #7a8aa8; stroke-width: 2; }
.l-rdg { stroke: #3d6a34; stroke-width: 2.200; }
.l-edge { stroke: #7f8a96; stroke-width: 1.800; }
.c-lav { stroke: #a6a6de; stroke-width: 1.500; fill: none; }
.c-grn { stroke: #2f6a3c; stroke-width: 1.500; fill: none; }
.c-bright { stroke: #19a319; stroke-width: 1.500; fill: none; }
.c-mag { stroke: #e060e0; stroke-width: 1.500; fill: none; }
.c-teal { stroke: #58c8c0; stroke-width: 1.500; fill: none; }
.c-red { stroke: #c01c30; stroke-width: 2; fill: none; }
.nodes circle { fill: #d6d62a; }
.mids circle { fill: #5a4aa0; }
.pick { fill: none; stroke: #1a1a1a; stroke-width: 1; }
.cursor { fill: #f2f2f2; stroke: #999; stroke-width: .5; }
.cv { padding-bottom: 3px; }
.cv .vthumb.long { flex: 1; background: #f0f0f0; }
.ch { height: 15px; padding: 0 5px 0 3px; }
.hthumb.wide { left: 16px; width: 171px; }
.corner { background: #f0f0f0; }

/* right */
.right { flex: 1; display: flex; flex-direction: column; position: relative; min-width: 0; background: #cfe0f3; }
.right .phead { gap: 8px; padding-right: 0; padding-left: 0; }
.rtools { height: 20px; flex: none; display: flex; align-items: center; gap: 5px; padding-left: 10px; background: linear-gradient(#dfebf9, #cddff4); }
.cat { fill: none; stroke: #4f6f8f; stroke-width: 1.300; }
.azt { font: bold 7px "Liberation Sans", sans-serif; fill: #3767b0; }
.azr { font: bold 7px "Liberation Sans", sans-serif; fill: #c04040; }
.bolt { fill: #e0c12c; stroke: #b88a1c; stroke-width: .6; }
.pgwrap { height: 252px; flex: none; display: flex; background: #fff; }
.pg { flex: 1; padding-top: 0; min-width: 0; }
.pr { height: 17px; display: flex; align-items: center; font-size: 10.200px; color: #2c2c2c; border-bottom: 1px solid #eeeeee; white-space: nowrap; overflow: hidden; }
.pk { width: 75px; flex: none; padding-left: 7px; border-right: 1px solid #eee; height: 100%; line-height: 16px; position: relative; }
.pk.tog { padding-left: 24px; }
.pk.sub { padding-left: 41px; }
.pk.ind { padding-left: 24px; }
.pv { flex: 1; padding-left: 3px; line-height: 16px; display: flex; align-items: center; overflow: hidden; }
.dim { color: #a8b0b8; }
.swatch { width: 15px; height: 14px; background: #ffff00; margin-left: 8px; }
.minus { width: 9px; height: 9px; border: 1px solid #9aa6b2; position: absolute; left: 8px; top: 3px; background: linear-gradient(#9aa6b2, #9aa6b2) center/5px 1px no-repeat; }
.pr.head { position: relative; }
.pr.head .minus { top: 4px; }
.hd { flex: 1; margin-left: 20px; height: 100%; background: #d6e4f2; color: #a9c4e4; font-weight: 700; font-size: 10.200px; line-height: 16px; padding-left: 4px; letter-spacing: .1px; }
.dots3 { background: #c8dbee; height: 100%; justify-content: center; padding: 0; margin-top: 0; }
.rv { width: 10px; padding: 6px 0 5px; }
.rv .chev { width: 8px; }
.vthumb.rth { flex: none; height: 142px; background: #cdcdcd; margin-bottom: 82px; }
.pdesc { flex: 1; background: #d2e3f3; border-top: 1px solid #b9cfe6; }
.rb2 { left: auto; right: -3px; top: 102px; }

/* status */
.status { height: 17px; flex: none; display: flex; position: relative; align-items: center; background: linear-gradient(#cfe1f6, #a5c7ec); font-size: 9.700px; color: #3c5f90; white-space: nowrap; border-top: 1px solid #c2d8f0; }
.st { color: #3c5f90; }
.s-msg { margin-left: 2px; width: 365px; }
.st.on { color: #1e4fa8; }
.st.off { color: #8aa2bd; }
.s-ma { width: 50px; }
.s-co { width: 150px; color: #4a6c96; }
.s-or { width: 67px; }
.s-pl { width: 63px; }
.s-bh { width: 55px; }
.s-ka { width: 105px; }
.st-yellow { width: 28px; height: 17px; background: #ffff00; flex: none; }

/* dialog */
.dialog { position: absolute; left: 542px; top: 141px; width: 221px; height: 212px; background: #f0f0f0; border: 1px solid #5f8fc0; box-shadow: 1px 1px 3px rgba(30, 50, 70, .35); z-index: 4; font-size: 9.500px; letter-spacing: -.3px; color: #333; display: flex; flex-direction: column; }
.dtitle { height: 22px; flex: none; background: #fff; display: flex; align-items: center; justify-content: space-between; padding: 0 8px 0 2px; font-size: 10.800px; letter-spacing: 0; color: #333; }
.dx { width: 11px; height: 11px; fill: none; stroke: #333; stroke-width: 1; }
.dbody { flex: 1; padding: 8px 8px 0; display: flex; flex-direction: column; }
.combo { height: 18px; flex: none; display: flex; align-items: center; justify-content: space-between; padding: 0 4px 0 3px; background: #e1e1e1; border: 1px solid #adadad; }
.cchev { width: 9px; height: 5px; fill: none; stroke: #555; stroke-width: 1; }
.fs { margin: 0; border: 1px solid #dcdcdc; padding: 0; min-width: 0; }
.fs legend { padding: 0 1px; margin-left: 5px; line-height: 12px; color: #333; }
.outer { margin-top: 4px; height: 102px; }
.fsrow { display: flex; align-items: center; padding-left: 11px; height: 80px; margin-top: 0; }
.inner { width: 125px; height: 67px; padding: 4px 0 0 10px; flex: none; margin-top: 7px; }
.inner legend { margin-left: 5px; }
.inrow { display: flex; align-items: center; justify-content: space-between; height: 19px; margin-bottom: 4px; padding-right: 12px; }
.inrow label { color: #444; }
.inp { width: 50px; height: 19px; background: #fff; border: 1px solid #8f8f8f; padding-left: 5px; line-height: 17px; color: #333; }
.btn { font-family: inherit; font-size: 9.500px; letter-spacing: -.3px; color: #333; background: #e1e1e1; border: 1px solid #adadad; padding: 0; margin: 0; white-space: nowrap; display: block; }
.pickb { width: 48px; height: 18px; margin: 12px 0 0 10px; }
.wide-b { height: 18px; margin-top: 7px; flex: none; width: 203px; }
.drow { display: flex; justify-content: space-between; margin-top: 7px; width: 204px; }
.zero { width: 123px; height: 18px; }
.cancel { width: 61px; height: 18px; border: 2px solid #0078d7; line-height: 14px; }
```
